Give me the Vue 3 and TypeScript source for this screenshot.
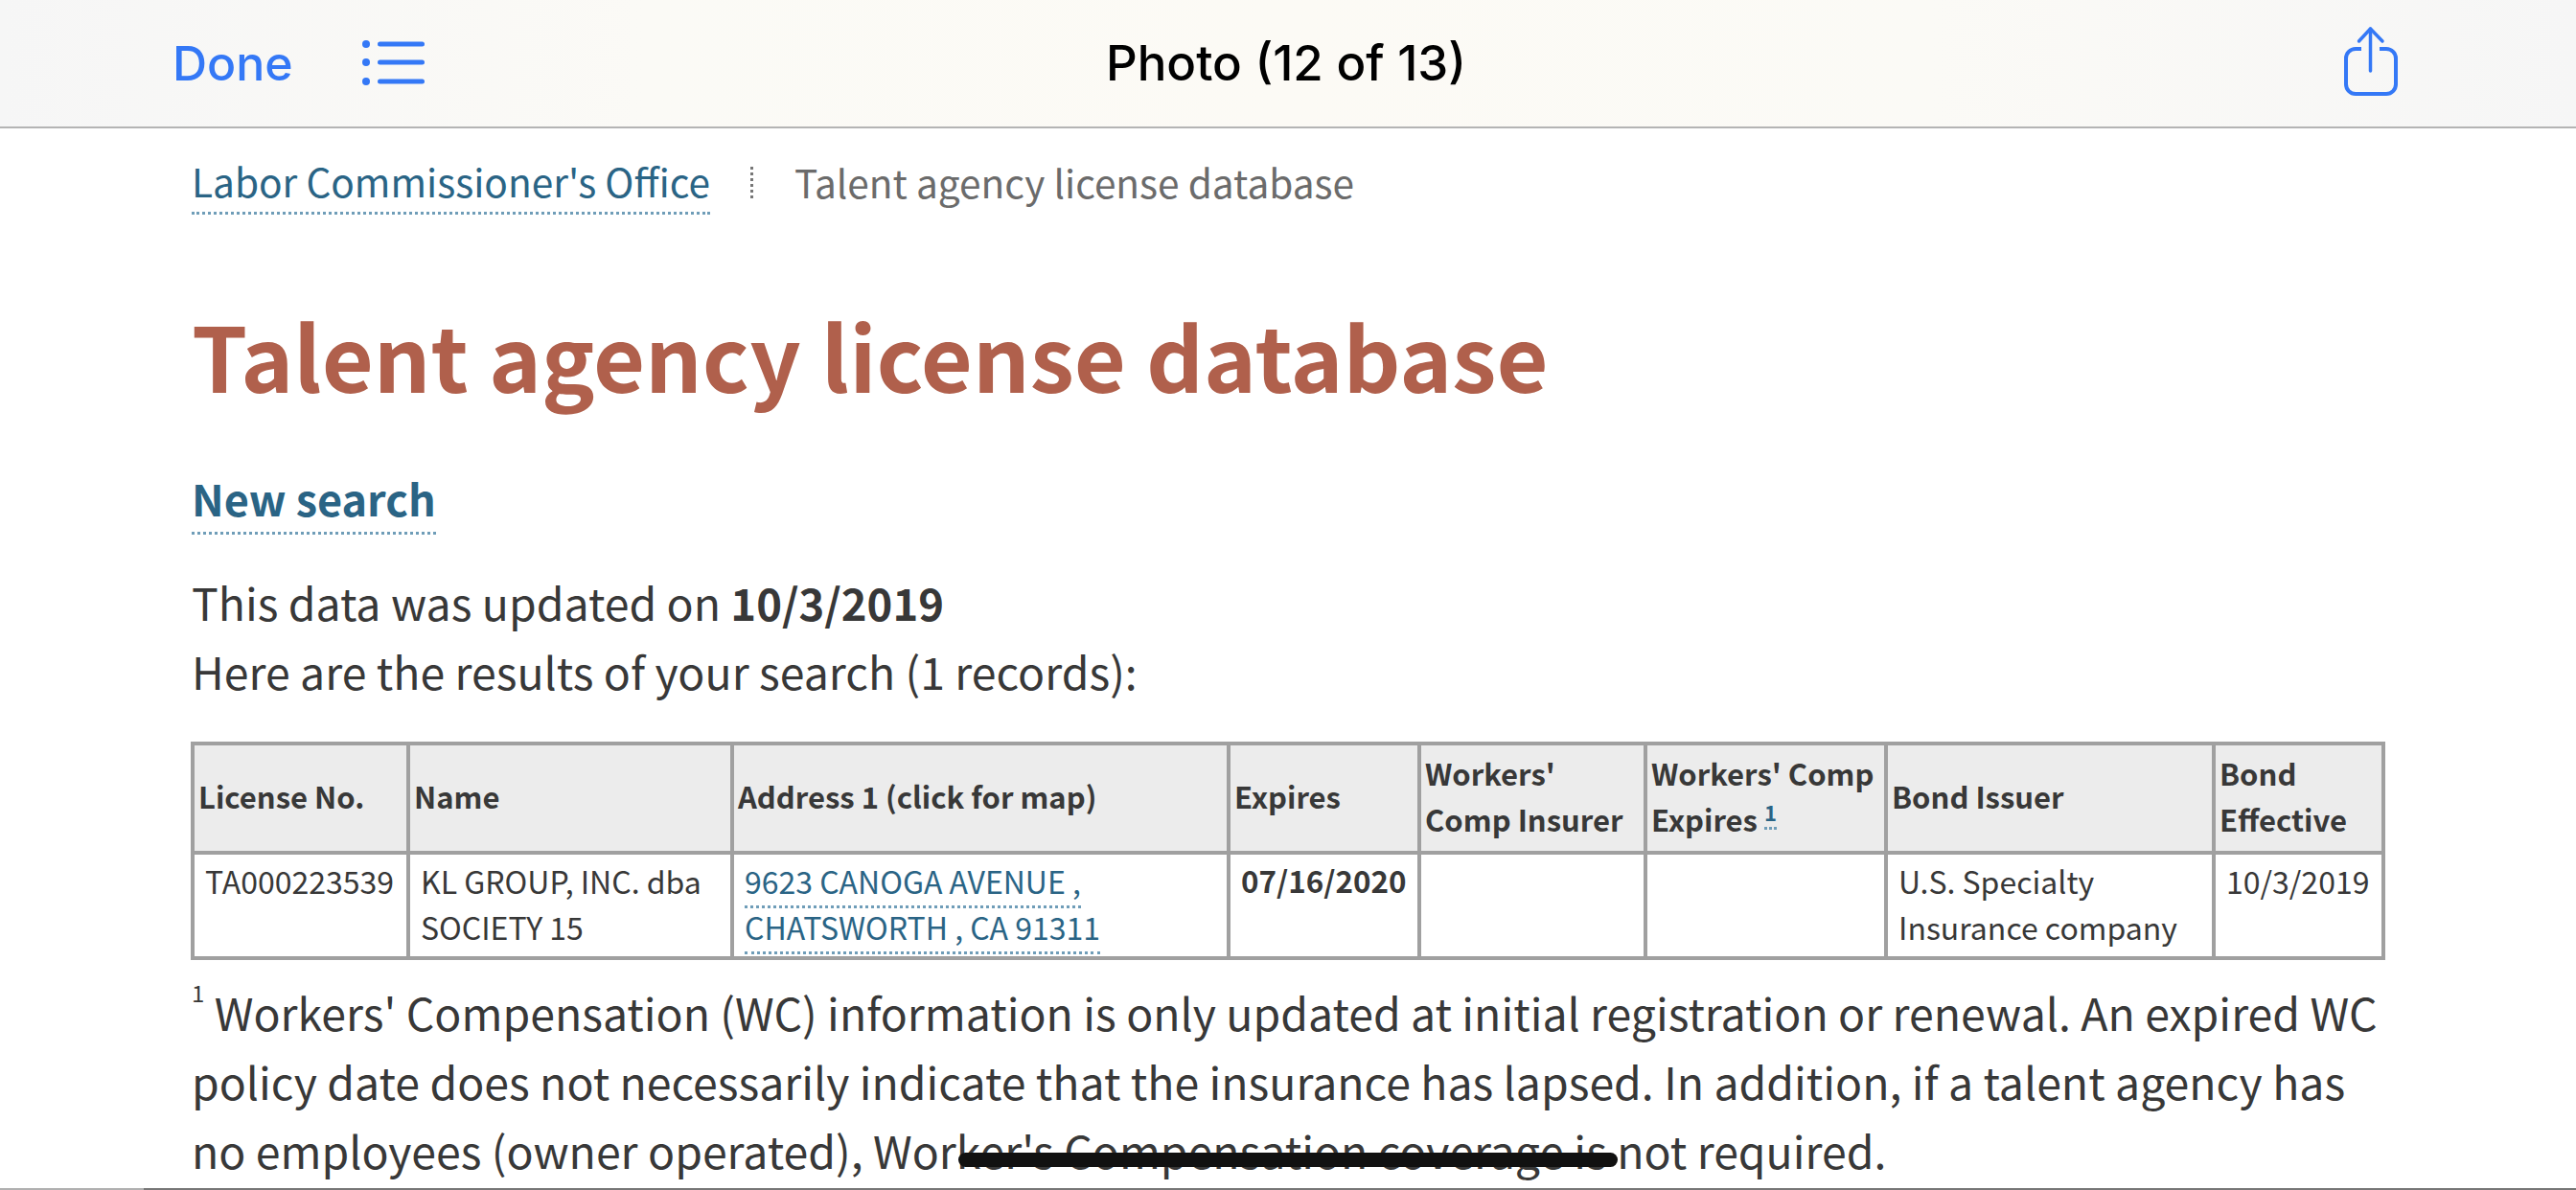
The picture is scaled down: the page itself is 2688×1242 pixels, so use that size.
<script setup lang="ts">
interface Column { label: string; width: number }
const columns: Column[] = [
  { label: 'License No.', width: 225 },
  { label: 'Name', width: 338 },
  { label: 'Address 1 (click for map)', width: 518 },
  { label: 'Expires', width: 199 },
  { label: "Workers' Comp Insurer", width: 236 },
  { label: "Workers' Comp Expires", width: 251 },
  { label: 'Bond Issuer', width: 342 },
  { label: 'Bond Effective', width: 177 },
]
</script>

<template>
  <div class="screen">
    <header class="bar">
      <div class="bar-left">
        <span class="done">Done</span>
        <svg class="list-icon" width="68" height="48" viewBox="0 0 68 48">
          <g fill="#3478f6">
            <circle cx="5" cy="4" r="4" />
            <circle cx="5" cy="23" r="4" />
            <circle cx="5" cy="43" r="4" />
            <rect x="17" y="1.5" width="49" height="5" rx="2.5" />
            <rect x="17" y="20.5" width="49" height="5" rx="2.5" />
            <rect x="17" y="40.5" width="49" height="5" rx="2.5" />
          </g>
        </svg>
      </div>
      <div class="bar-title">Photo (12 of 13)</div>
      <svg class="share-icon" width="60" height="76" viewBox="0 0 60 76">
        <g fill="none" stroke="#3478f6" stroke-linecap="round" stroke-linejoin="round">
          <path stroke-width="4" stroke-linecap="butt" d="M20 24H14A10 10 0 0 0 4 34V61A10 10 0 0 0 14 71H46A10 10 0 0 0 56 61V34A10 10 0 0 0 46 24H39" />
          <path stroke-width="3.5" d="M29.5 47V3" />
          <path stroke-width="3.5" d="M17.5 16 29.5 3 42 16" />
        </g>
      </svg>
    </header>

    <main class="content">
      <nav class="crumbs">
        <a class="link">Labor Commissioner's Office</a>
        <span class="crumb-sep"></span>
        <span class="crumb-current">Talent agency license database</span>
      </nav>

      <h1 class="title">Talent agency license database</h1>

      <p class="new-search"><a class="link">New search</a></p>

      <p class="intro">
        This data was updated on <strong>10/3/2019</strong><br />
        Here are the results of your search (1 records):
      </p>

      <table class="results">
        <colgroup>
          <col v-for="c in columns" :key="c.label" :style="{ width: c.width + 'px' }" />
        </colgroup>
        <thead>
          <tr>
            <th>License No.</th>
            <th>Name</th>
            <th>Address 1 (click for map)</th>
            <th>Expires</th>
            <th>Workers'<br />Comp Insurer</th>
            <th class="nowrap">Workers' Comp<br />Expires <sup><a class="link note-ref">1</a></sup></th>
            <th>Bond Issuer</th>
            <th>Bond Effective</th>
          </tr>
        </thead>
        <tbody>
          <tr>
            <td>TA000223539</td>
            <td>KL GROUP, INC. dba SOCIETY 15</td>
            <td><a class="link address">9623 CANOGA AVENUE , CHATSWORTH , CA 91311</a></td>
            <td class="strong">07/16/2020</td>
            <td></td>
            <td></td>
            <td>U.S. Specialty Insurance company</td>
            <td>10/3/2019</td>
          </tr>
        </tbody>
      </table>

      <p class="footnote">
        <sup class="fn-mark">1</sup> Workers' Compensation (WC) information is only updated at initial registration or renewal. An expired WC policy date does not necessarily indicate that the insurance has lapsed. In addition, if a talent agency has no employees (owner operated), Worker's Compensation coverage is not required.
      </p>
    </main>

    <div class="scribble"></div>
    <div class="bottom-line"></div>
  </div>
</template>

<style>
html, body { margin: 0; background: #fff; }
</style>

<style scoped>
.screen {
  position: relative;
  width: 2688px;
  height: 1242px;
  overflow: hidden;
  background: #fff;
  font-family: "Noto Sans CJK SC", "Noto Sans CJK JP", sans-serif;
  color: #383838;
}
.bar {
  height: 134px;
  box-sizing: border-box;
  border-bottom: 2px solid #b4b4b4;
  background: linear-gradient(90deg, #f6f6f6 0%, #fbfaf6 25%, #fcfaf5 50%, #fbfaf6 75%, #f6f6f6 100%);
  display: grid;
  grid-template-columns: 1fr auto 1fr;
  align-items: center;
  padding: 0 184px 0 180px;
  font-family: Inter, "Liberation Sans", sans-serif;
}
.bar-left {
  display: flex;
  align-items: center;
  gap: 71px;
}
.done {
  color: #3478f6;
  font-size: 50px;
  font-weight: 500;
  line-height: 60px;
}
.list-icon { display: block; }
.bar-title {
  color: #000;
  font-size: 51px;
  font-weight: 500;
  line-height: 60px;
}
.share-icon {
  display: block;
  justify-self: end;
  margin-top: -2px;
}
.content {
  padding: 0 200px;
}
.link {
  color: #2a6485;
  border-bottom: 3px dotted #6f9db8;
}
.crumbs {
  display: flex;
  align-items: center;
  gap: 42.5px;
  margin-top: 24px;
  font-size: 40.6px;
  line-height: 64px;
  height: 64px;
}
.crumb-sep {
  width: 0;
  height: 33px;
  border-left: 3px dotted #777;
}
.crumb-current { color: #6b6b6b; }
.title {
  margin: 88px 0 0;
  color: #b0604c;
  font-size: 93.2px;
  font-weight: 700;
  line-height: 120px;
}
.new-search {
  margin: 58px 0 0;
  font-size: 45px;
  font-weight: 600;
  line-height: 64px;
}
.new-search .link { padding-bottom: 3px; }
.intro {
  margin: 40px 0 0;
  font-size: 46.4px;
  line-height: 72px;
}
.intro strong { font-size: 45.4px; font-weight: 600; }
.results {
  margin: 38px 0 0 -1px;
  width: 2286px;
  table-layout: fixed;
  border-collapse: collapse;
  border: 4px solid #a0a0a0;
  font-size: 32px;
  line-height: 48px;
}
.results th,
.results td {
  border: 4px solid #a0a0a0;
  text-align: left;
}
.results th {
  padding: 2px 4px 6px;
  background: #ececec;
  font-size: 31px;
  font-weight: 600;
  height: 114px;
  box-sizing: border-box;
  vertical-align: middle;
}
.results th.nowrap { white-space: nowrap; }
.results td {
  padding: 3px 11px 0;
  vertical-align: top;
  height: 110px;
  box-sizing: border-box;
}
.results td.strong { font-size: 31.4px; font-weight: 600; }
.address { padding-bottom: 3px; }
.note-ref { font-size: 22px; }
.results sup { line-height: 0; }
.footnote {
  margin: 18px 0 0;
  font-size: 46.4px;
  line-height: 72px;
}
.fn-mark {
  font-size: 24px;
  line-height: 0;
  vertical-align: 30px;
}
.scribble {
  position: absolute;
  left: 1000px;
  top: 1203px;
  width: 688px;
  height: 15px;
  border-radius: 8px;
  background: #111;
}
.bottom-line {
  position: absolute;
  left: 0;
  right: 0;
  bottom: 0;
  height: 2px;
  background: linear-gradient(90deg, #b0b0b0 150px, #777 150px);
}
</style>
